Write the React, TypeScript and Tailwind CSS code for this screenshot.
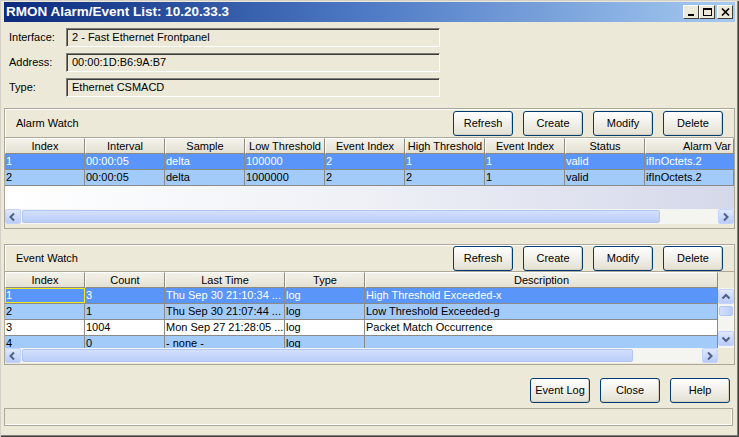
import React from 'react';

type Col = { label: string; w: string; end?: boolean };

const alarmCols: Col[] = [
  { label: 'Index', w: 'w-[80px]' },
  { label: 'Interval', w: 'w-[80px]' },
  { label: 'Sample', w: 'w-[80px]' },
  { label: 'Low Threshold', w: 'w-[80px]' },
  { label: 'Event Index', w: 'w-[80px]' },
  { label: 'High Threshold', w: 'w-[80px]' },
  { label: 'Event Index', w: 'w-[80px]' },
  { label: 'Status', w: 'w-[80px]' },
  { label: 'Alarm Var', w: 'w-[89px]', end: true },
];

const alarmRows = [
  ['1', '00:00:05', 'delta', '100000', '2', '1', '1', 'valid', 'ifInOctets.2'],
  ['2', '00:00:05', 'delta', '1000000', '2', '2', '1', 'valid', 'ifInOctets.2'],
];

const eventCols: Col[] = [
  { label: 'Index', w: 'w-[80px]' },
  { label: 'Count', w: 'w-[80px]' },
  { label: 'Last Time', w: 'w-[120px]' },
  { label: 'Type', w: 'w-[80px]' },
  { label: 'Description', w: 'w-[353px]' },
];

const eventRows = [
  ['1', '3', 'Thu Sep 30 21:10:34 ...', 'log', 'High Threshold Exceeded-x'],
  ['2', '1', 'Thu Sep 30 21:07:44 ...', 'log', 'Low Threshold Exceeded-g'],
  ['3', '1004', 'Mon Sep 27 21:28:05 ...', 'log', 'Packet Match Occurrence'],
  ['4', '0', '- none -', 'log', ''],
];

// row colours: first row selected, then light blue / white striping
const rowBg = ['bg-[#5a96f9] text-white', 'bg-[#a3cbfa]', 'bg-white', 'bg-[#a3cbfa]'];

const XpButton = ({ label }: { label: string }) => (
  <button className="w-[60px] h-[25px] shrink-0 rounded-[3px] border border-[#003c74] bg-linear-to-b from-white to-[#e3e0d2] text-[11px] text-black shadow-[inset_-1px_-1px_0_#d6d0c0]">
    {label}
  </button>
);

const Chevron = ({ dir }: { dir: 'left' | 'right' | 'up' | 'down' }) => {
  const d = {
    left: 'M6 1.5 L2.5 5 L6 8.5',
    right: 'M3 1.5 L6.5 5 L3 8.5',
    up: 'M1.5 6.5 L5 3 L8.5 6.5',
    down: 'M1.5 3.5 L5 7 L8.5 3.5',
  }[dir];
  return (
    <svg width="10" height="10" viewBox="0 0 10 10">
      <path d={d} stroke="#4d6185" strokeWidth="2" fill="none" />
    </svg>
  );
};

const ArrowBtn = ({ dir }: { dir: 'left' | 'right' | 'up' | 'down' }) => (
  <div className="w-[16px] h-[15px] shrink-0 flex items-center justify-center rounded-[2px] border border-[#c3d3fd] bg-linear-to-b from-[#e0e9fe] to-[#b9cbf7]">
    <Chevron dir={dir} />
  </div>
);

const HScroll = ({ thumb, className = '' }: { thumb: string; className?: string }) => (
  <div className={`flex h-[15px] bg-[#f4f4f0] ${className}`}>
    <ArrowBtn dir="left" />
    <div className="flex-1 p-[1px]">
      <div className={`${thumb} h-full rounded-[2px] border border-[#b3c6f3] bg-linear-to-b from-[#d3e0fc] to-[#bacdf8]`} />
    </div>
    <ArrowBtn dir="right" />
  </div>
);

const HeaderRow = ({ cols }: { cols: Col[] }) => (
  <div className="flex h-[16px] shrink-0 overflow-hidden">
    {cols.map((c, i) => (
      <div
        key={i}
        className={`${c.w} shrink-0 h-full flex items-center ${c.end ? 'justify-end pr-[2px]' : 'justify-center'} whitespace-nowrap overflow-hidden bg-linear-to-b from-[#f3f2ea] to-[#e4e1d3] border-l border-t border-white border-r border-b border-r-[#8d8b80] border-b-[#8d8b80]`}
      >
        {c.label}
      </div>
    ))}
  </div>
);

const DataRow = ({ cols, cells, bg, focus }: { cols: Col[]; cells: string[]; bg: string; focus?: boolean }) => (
  <div className={`flex h-[16px] shrink-0 border-b border-[#8a8a8a] ${bg}`}>
    {cols.map((c, i) => (
      <div
        key={i}
        className={`${c.w} shrink-0 h-full flex items-center pl-[1px] whitespace-nowrap overflow-hidden border-r border-[#8a8a8a] ${
          focus && i === 0 ? 'outline outline-1 -outline-offset-1 outline-[#f2ea1a]' : ''
        }`}
      >
        {cells[i]}
      </div>
    ))}
  </div>
);

const Field = ({ label, value }: { label: string; value: string }) => (
  <div className="flex items-center h-[19px]">
    <div className="w-[62px] pl-[5px]">{label}</div>
    <div className="w-[374px] h-[19px] flex items-center pl-[5px] border-t border-l border-[#7f7d74] border-b border-r border-b-white border-r-white shadow-[inset_1px_1px_0_#3c3c3c]">
      {value}
    </div>
  </div>
);

const SectionBar = ({ title, h }: { title: string; h: string }) => (
  <div className={`${h} shrink-0 flex items-center border border-[#aca899] shadow-[inset_1px_1px_0_white] px-[11px]`}>
    <span>{title}</span>
    <div className="ml-auto flex gap-[10px]">
      {['Refresh', 'Create', 'Modify', 'Delete'].map((b) => (
        <XpButton key={b} label={b} />
      ))}
    </div>
  </div>
);

const WinBtn = ({ children }: { children: React.ReactNode }) => (
  <div className="w-[16px] h-[14px] flex items-center justify-center bg-[#ece9d8] border border-t-white border-l-white border-r-[#404040] border-b-[#404040]">
    {children}
  </div>
);

export default function App() {
  return (
    <div className="w-[739px] h-[437px] overflow-hidden bg-[#ece9d8] text-[11px] text-black font-['Liberation_Sans',Arial,sans-serif] flex flex-col px-[4px] pt-[2px] shadow-[inset_1px_1px_0_#d4d0c8,inset_-1px_-1px_0_#404040,inset_-2px_-2px_0_#808080]">
      {/* title bar */}
      <div className="h-[20px] shrink-0 flex items-center pl-[2px] pr-[2px] bg-linear-to-r from-[#0c2a7c] via-[#4f7bc6] to-[#a6caf0]">
        <span className="text-white font-bold text-[13.5px] leading-none">RMON Alarm/Event List: 10.20.33.3</span>
        <div className="ml-auto flex">
          <WinBtn>
            <div className="w-[6px] h-[2px] bg-black mt-[6px]" />
          </WinBtn>
          <WinBtn>
            <div className="w-[9px] h-[8px] border border-black border-t-2" />
          </WinBtn>
          <div className="w-[2px]" />
          <WinBtn>
            <svg width="9" height="8" viewBox="0 0 9 8">
              <path d="M1 0.5 L8 7.5 M8 0.5 L1 7.5" stroke="black" strokeWidth="1.6" />
            </svg>
          </WinBtn>
        </div>
      </div>

      {/* fields */}
      <div className="mt-[6px] flex flex-col gap-[6px]">
        <Field label="Interface:" value="2 - Fast Ethernet Frontpanel" />
        <Field label="Address:" value="00:00:1D:B6:9A:B7" />
        <Field label="Type:" value="Ethernet CSMACD" />
      </div>

      {/* alarm watch */}
      <div className="mt-[11px]">
        <SectionBar title="Alarm Watch" h="h-[30px]" />
        <div className="h-[91px] flex flex-col border-x border-b border-[#aca899]">
          <HeaderRow cols={alarmCols} />
          {alarmRows.map((r, i) => (
            <DataRow key={i} cols={alarmCols} cells={r} bg={rowBg[i]} />
          ))}
          <div className="flex-1 bg-linear-to-r from-white via-[#eef0f6] to-[#d5d8ea]" />
          <HScroll thumb="w-[638px]" />
          <div className="h-[4px]" />
        </div>
      </div>

      {/* event watch */}
      <div className="mt-[15px]">
        <SectionBar title="Event Watch" h="h-[28px]" />
        <div className="h-[93px] flex flex-col border-x border-b border-[#aca899]">
          <HeaderRow cols={eventCols} />
          <div className="h-[60px] flex overflow-hidden">
            <div className="w-[713px] shrink-0 flex flex-col overflow-hidden">
              {eventRows.map((r, i) => (
                <DataRow key={i} cols={eventCols} cells={r} bg={rowBg[i]} focus={i === 0} />
              ))}
            </div>
            <div className="w-[16px] flex flex-col items-center bg-[#f4f4f0] pt-[1px]">
              <ArrowBtn dir="up" />
              <div className="flex-1 w-full pt-[2px] px-[1px]">
                <div className="h-[10px] rounded-[2px] border border-[#b3c6f3] bg-linear-to-r from-[#d3e0fc] to-[#bacdf8]" />
              </div>
              <ArrowBtn dir="down" />
              <div className="h-[2px]" />
            </div>
          </div>
          <div className="flex">
            <HScroll thumb="w-[611px]" className="w-[713px]" />
            <div className="flex-1 bg-[#ece9d8]" />
          </div>
        </div>
      </div>

      {/* bottom buttons */}
      <div className="mt-[13px] flex justify-end gap-[10px] pr-[5px]">
        <XpButton label="Event Log" />
        <XpButton label="Close" />
        <XpButton label="Help" />
      </div>

      {/* status bar */}
      <div className="mt-[5px] mr-[2px] h-[18px] border border-[#aca899] shadow-[inset_-1px_-1px_0_white]" />
    </div>
  );
}
